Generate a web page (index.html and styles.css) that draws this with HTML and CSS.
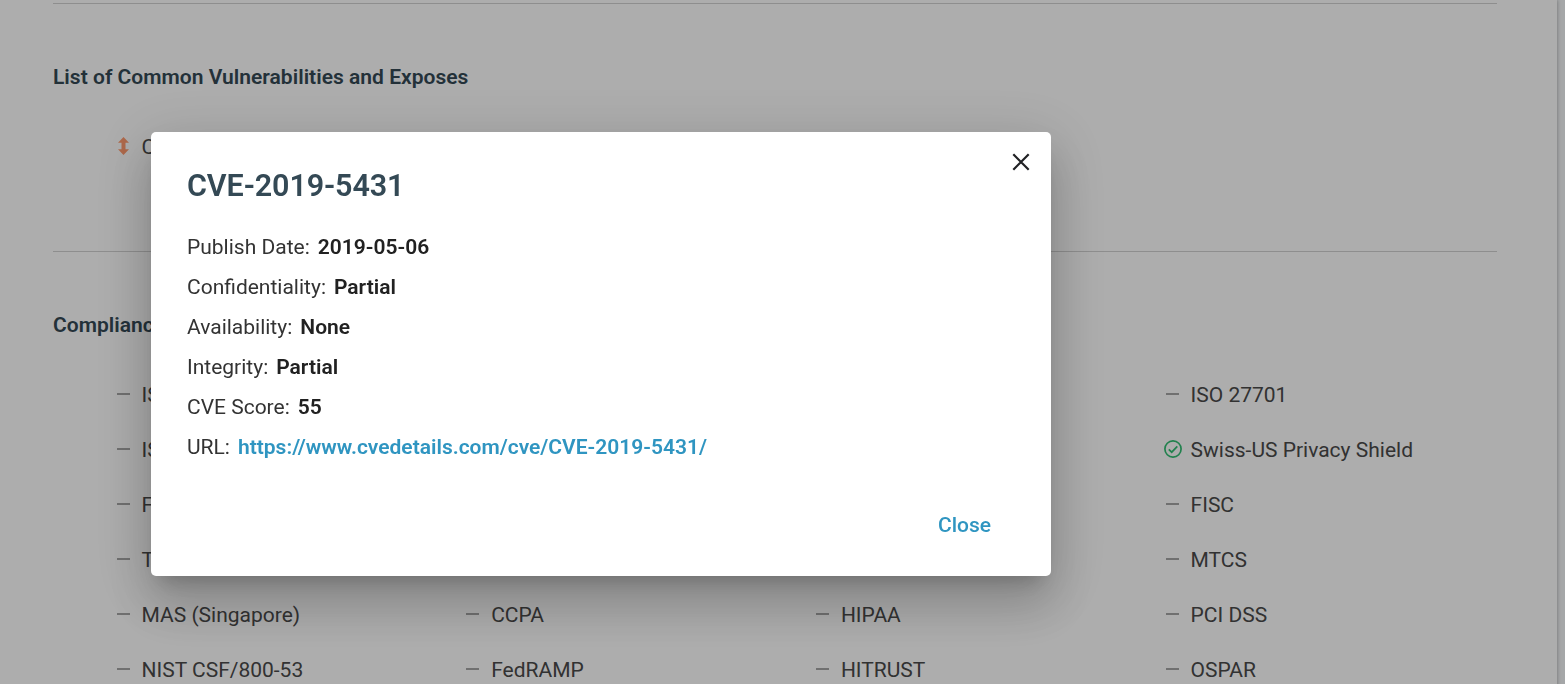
FILE: index.html
```html
<!DOCTYPE html>
<html lang="en">
<head>
<meta charset="utf-8">
<title>CVE-2019-5431</title>
<link rel="stylesheet" href="styles.css">
</head>
<body>
<div class="page">
  <main class="panel">
    <section class="section">
      <h2 class="heading">List of Common Vulnerabilities and Exposes</h2>
      <ul class="grid">
        <li class="item">
          <svg class="icon" viewBox="0 0 18 18"><path d="M8.500 0 14 5.800H10.500V12.200H14L8.500 18 3 12.200H6.500V5.800H3Z" fill="#ff9a6e"/></svg>
          <span>CVE-2019-5431</span>
        </li>
      </ul>
    </section>
    <section class="section">
      <h2 class="heading">Compliance</h2>
      <ul class="grid">
        <li class="item"><i class="dash"></i><span>ISO</span></li>
        <li class="item last"><i class="dash"></i><span>ISO 27701</span></li>
        <li class="item"><i class="dash"></i><span>ISO</span></li>
        <li class="item last">
          <svg class="icon" viewBox="0 0 18 18" fill="none" stroke="#33bf73" stroke-width="1.700"><circle cx="9" cy="9" r="8.100"/><path d="M4.800 9.300 7.700 12.200 13.300 6.300"/></svg>
          <span>Swiss-US Privacy Shield</span>
        </li>
        <li class="item"><i class="dash"></i><span>F</span></li>
        <li class="item last"><i class="dash"></i><span>FISC</span></li>
        <li class="item"><i class="dash"></i><span>T</span></li>
        <li class="item last"><i class="dash"></i><span>MTCS</span></li>
        <li class="item"><i class="dash"></i><span>MAS (Singapore)</span></li>
        <li class="item"><i class="dash"></i><span>CCPA</span></li>
        <li class="item"><i class="dash"></i><span>HIPAA</span></li>
        <li class="item"><i class="dash"></i><span>PCI DSS</span></li>
        <li class="item"><i class="dash"></i><span>NIST CSF/800-53</span></li>
        <li class="item"><i class="dash"></i><span>FedRAMP</span></li>
        <li class="item"><i class="dash"></i><span>HITRUST</span></li>
        <li class="item"><i class="dash"></i><span>OSPAR</span></li>
      </ul>
    </section>
  </main>
</div>
<div class="backdrop">
  <div class="dialog" role="dialog" aria-labelledby="dialog-title">
    <button class="dismiss" aria-label="Dismiss">
      <svg viewBox="0 0 18 18" width="18" height="18"><path d="M1.300 1.300 16.700 16.700M16.700 1.300 1.300 16.700" stroke="#202124" stroke-width="2.200" fill="none"/></svg>
    </button>
    <h1 class="title" id="dialog-title">CVE-2019-5431</h1>
    <dl class="details">
      <div class="row"><dt>Publish Date:</dt><dd>2019-05-06</dd></div>
      <div class="row"><dt>Confidentiality:</dt><dd>Partial</dd></div>
      <div class="row"><dt>Availability:</dt><dd>None</dd></div>
      <div class="row"><dt>Integrity:</dt><dd>Partial</dd></div>
      <div class="row"><dt>CVE Score:</dt><dd>55</dd></div>
      <div class="row"><dt>URL:</dt><dd><a class="link" href="https://www.cvedetails.com/cve/CVE-2019-5431/">https://www.cvedetails.com/cve/CVE-2019-5431/</a></dd></div>
    </dl>
    <div class="actions"><button class="close">Close</button></div>
  </div>
</div>
</body>
</html>
```
FILE: styles.css
```css
* { box-sizing: border-box; }
html, body { height: 100%; overflow: hidden; }
body {
  margin: 0;
  font-family: Roboto, "Liberation Sans", sans-serif;
  font-size: 21px;
  color: #4a4a4a;
  background: #f4f6f8;
}
.page { height: 684px; overflow: hidden; }
.panel {
  width: 1557px;
  padding: 3px 60px 0 53px;
  background: #fff;
  box-shadow: 0 0 4px rgba(0, 0, 0, .35);
}
.section { height: 248px; border-top: 1px solid #d2d2d2; padding-top: 58px; }
.section + .section { height: 460px; }
.heading { margin: 0; font-size: 21px; line-height: 30px; font-weight: 600; letter-spacing: .02px; color: #344955; }
.grid {
  display: grid;
  grid-template-columns: repeat(4, 349.700px);
  grid-auto-rows: 55px;
  margin: 26px 0 0;
  padding: 0 0 0 61.500px;
  list-style: none;
}
.item { display: flex; align-items: center; gap: 9px; line-height: 30px; white-space: nowrap; }
.item span { padding-top: 2px; }
.last { grid-column: 4; }
.icon { width: 18px; height: 18px; flex: none; }
.dash { width: 13px; height: 2px; margin: 0 3px 0 2px; background: #a6a6a6; }
.backdrop {
  position: fixed;
  inset: 0;
  padding: 132px 0 0 151px;
  background: rgba(0, 0, 0, .32);
}
.dialog {
  position: relative;
  width: 900px;
  height: 444px;
  padding: 36px;
  border-radius: 5px;
  background: #fff;
  color: #212121;
  box-shadow: 0 13.750px 18.750px -8.750px rgba(0, 0, 0, .2), 0 30px 47.500px 3.750px rgba(0, 0, 0, .14), 0 11.250px 57.500px 10px rgba(0, 0, 0, .12);
}
.dismiss {
  position: absolute;
  top: 21px;
  right: 21px;
  padding: 0;
  border: 0;
  background: none;
  line-height: 0;
}
.title { margin: 0; font-size: 30.500px; line-height: 35px; font-weight: 600; letter-spacing: -.1px; color: #344955; }
.details { margin: 24px 0 0; }
.row { display: flex; gap: 8px; line-height: 40px; }
dt { font-weight: 400; color: #333; }
dd { margin: 0; font-weight: 600; }
.link { color: #2f95c1; text-decoration: none; }
.actions { display: flex; justify-content: flex-end; padding: 38px 24px 0 0; }
.close { padding: 0; border: 0; background: none; font: 500 21px/40px Roboto, sans-serif; color: #2f95c1; }
```
